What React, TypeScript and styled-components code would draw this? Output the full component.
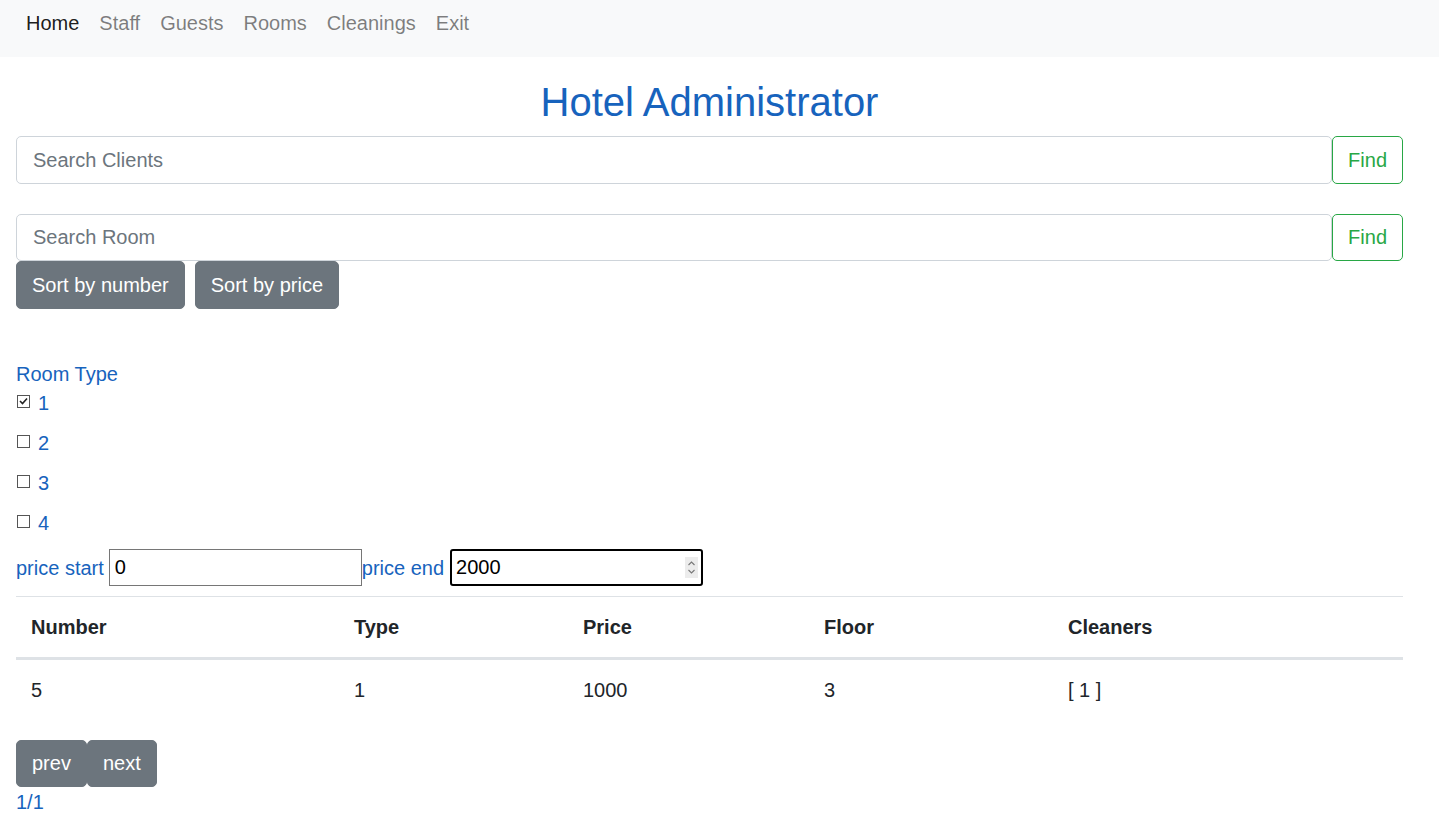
import React from "react";
import styled, { createGlobalStyle } from "styled-components";

const Global = createGlobalStyle`
  html, body { margin: 0; padding: 0; background: #fff; }
  body {
    font-family: "Liberation Sans", Arial, sans-serif;
    font-size: 20px;
    line-height: 30px;
    color: #212529;
  }
  * { box-sizing: border-box; }
`;

const BLUE = "#1763bd";

const NavBar = styled.nav`
  height: 57px;
  background: #f8f9fa;
  padding: 8px 16px 0;
  display: flex;
  align-items: flex-start;
`;

const NavLink = styled.a<{ $active?: boolean }>`
  padding: 0 10px;
  line-height: 30px;
  font-size: 20px;
  color: ${(p) => (p.$active ? "rgba(0,0,0,0.9)" : "rgba(0,0,0,0.5)")};
  text-decoration: none;
  cursor: pointer;
`;

const Container = styled.main`
  padding: 0 36px 0 16px;
`;

const Title = styled.h1`
  margin: 21px 0 10px;
  font-size: 40px;
  line-height: 48px;
  font-weight: 400;
  color: ${BLUE};
  text-align: center;
`;

const SearchGroup = styled.div<{ $mb?: number; $h?: number }>`
  display: flex;
  height: ${(p) => p.$h ?? 48}px;
  margin-bottom: ${(p) => p.$mb ?? 0}px;
`;

const SearchInput = styled.input`
  flex: 1;
  min-width: 0;
  height: 100%;
  border: 1px solid #ced4da;
  border-radius: 5px;
  padding: 0 16px;
  font-family: inherit;
  font-size: 20px;
  color: #495057;
  outline: none;
  &::placeholder { color: #6c757d; }
`;

const FindButton = styled.button`
  height: 100%;
  border: 1px solid #28a745;
  border-radius: 5px;
  background: #fff;
  color: #28a745;
  padding: 0 15px;
  font-family: inherit;
  font-size: 20px;
`;

const ButtonRow = styled.div<{ $gap: number }>`
  display: flex;
  gap: ${(p) => p.$gap}px;
`;

const GrayButton = styled.button<{ $h?: number }>`
  height: ${(p) => p.$h ?? 48}px;
  border: 1px solid #6c757d;
  border-radius: 5px;
  background: #6c757d;
  color: #fff;
  padding: 0 15px;
  font-family: inherit;
  font-size: 20px;
`;

const SectionLabel = styled.div`
  color: ${BLUE};
  line-height: 30px;
  margin-top: 50px;
  margin-bottom: -1px;
`;

const CheckRow = styled.label`
  display: flex;
  align-items: center;
  height: 30px;
  margin-bottom: 10px;
  color: ${BLUE};
  padding-left: 1px;
`;

const CheckBox = styled.span`
  width: 13px;
  height: 13px;
  border: 1px solid #555;
  background: #fff;
  display: inline-flex;
  align-items: center;
  justify-content: center;
  margin-right: 8px;
  margin-top: -4px;
`;

const PriceRow = styled.div`
  display: flex;
  align-items: center;
  height: 37px;
  margin-top: 11px;
  color: ${BLUE};
`;

const PriceLabel = styled.span<{ $gap: number }>`
  margin-right: ${(p) => p.$gap}px;
`;

const InputWrap = styled.span`
  position: relative;
  display: inline-block;
  height: 37px;
`;

const PriceInput = styled.input<{ $focused?: boolean }>`
  width: 253px;
  height: 37px;
  padding: 0 5px;
  font-family: inherit;
  font-size: 20px;
  color: #000;
  border: ${(p) => (p.$focused ? "2px solid #000" : "1px solid #767676")};
  border-radius: ${(p) => (p.$focused ? "3px" : "0")};
  outline: none;
  padding-left: ${(p) => (p.$focused ? "4px" : "5px")};
`;

const Spinner = styled.span`
  position: absolute;
  right: 5px;
  top: 8px;
  width: 13px;
  height: 21px;
  background: #ececec;
  display: flex;
  align-items: center;
  justify-content: center;
`;

const Table = styled.table`
  width: 100%;
  margin-top: 10px;
  margin-bottom: 20px;
  border-collapse: collapse;
  table-layout: fixed;
  border-top: 1px solid #dee2e6;
`;

const Th = styled.th`
  text-align: left;
  font-weight: 700;
  padding: 15px;
  line-height: 30px;
  border-bottom: 3px solid #dee2e6;
`;

const Td = styled.td`
  padding: 15px;
  line-height: 30px;
`;

const PageInfo = styled.div`
  color: ${BLUE};
  line-height: 30px;
`;

const checked = [true, false, false, false];

export default function App() {
  return (
    <>
      <Global />
      <NavBar>
        <NavLink $active>Home</NavLink>
        <NavLink>Staff</NavLink>
        <NavLink>Guests</NavLink>
        <NavLink>Rooms</NavLink>
        <NavLink>Cleanings</NavLink>
        <NavLink>Exit</NavLink>
      </NavBar>
      <Container>
        <Title>Hotel Administrator</Title>
        <SearchGroup $mb={30}>
          <SearchInput placeholder="Search Clients" />
          <FindButton>Find</FindButton>
        </SearchGroup>
        <SearchGroup $h={47}>
          <SearchInput placeholder="Search Room" />
          <FindButton>Find</FindButton>
        </SearchGroup>
        <ButtonRow $gap={10}>
          <GrayButton>Sort by number</GrayButton>
          <GrayButton>Sort by price</GrayButton>
        </ButtonRow>
        <SectionLabel>Room Type</SectionLabel>
        {checked.map((c, i) => (
          <CheckRow key={i}>
            <CheckBox>
              {c && (
                <svg width="9" height="8" viewBox="0 0 9 8">
                  <path d="M1 4 L3.5 6.5 L8 1.5" fill="none" stroke="#222" strokeWidth="1.6" />
                </svg>
              )}
            </CheckBox>
            {i + 1}
          </CheckRow>
        ))}
        <PriceRow>
          <PriceLabel $gap={5}>price start</PriceLabel>
          <PriceInput defaultValue="0" />
          <PriceLabel $gap={6}>price end</PriceLabel>
          <InputWrap>
            <PriceInput $focused defaultValue="2000" />
            <Spinner>
              <svg width="9" height="17" viewBox="0 0 9 17">
                <path d="M1.5 6 L4.5 3 L7.5 6 M1.5 11 L4.5 14 L7.5 11" fill="none" stroke="#777" strokeWidth="1.1" />
              </svg>
            </Spinner>
          </InputWrap>
        </PriceRow>
        <Table>
          <colgroup>
            <col style={{ width: 323 }} />
            <col style={{ width: 229 }} />
            <col style={{ width: 241 }} />
            <col style={{ width: 244 }} />
            <col />
          </colgroup>
          <thead>
            <tr>
              <Th>Number</Th>
              <Th>Type</Th>
              <Th>Price</Th>
              <Th>Floor</Th>
              <Th>Cleaners</Th>
            </tr>
          </thead>
          <tbody>
            <tr>
              <Td>5</Td>
              <Td>1</Td>
              <Td>1000</Td>
              <Td>3</Td>
              <Td>[ 1 ]</Td>
            </tr>
          </tbody>
        </Table>
        <ButtonRow $gap={0}>
          <GrayButton $h={47}>prev</GrayButton>
          <GrayButton $h={47}>next</GrayButton>
        </ButtonRow>
        <PageInfo>1/1</PageInfo>
      </Container>
    </>
  );
}
